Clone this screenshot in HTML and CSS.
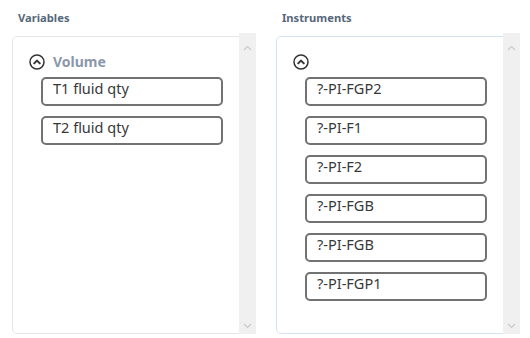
FILE: index.html
```html
<!DOCTYPE html>
<html>
<head>
<meta charset="utf-8">
<link rel="stylesheet" href="styles.css">
</head>
<body>
<div class="page">
  <section class="column">
    <div class="label">Variables</div>
    <div class="panel">
      <div class="panel-body">
        <div class="group-head">
          <span class="toggle"><svg width="16" height="16" viewBox="0 0 16 16"><circle cx="8" cy="8" r="7" fill="none" stroke="#333" stroke-width="1.5"/><path d="M5.2 9.4 L8 6.6 L10.8 9.4" fill="none" stroke="#333" stroke-width="2" stroke-linecap="round" stroke-linejoin="round"/></svg></span>
          <span class="group-title">Volume</span>
        </div>
        <div class="item">T1 fluid qty</div>
        <div class="item">T2 fluid qty</div>
      </div>
      <div class="scrollbar">
        <svg width="9" height="6" viewBox="0 0 9 6"><path d="M1 5 L4.5 1.5 L8 5" fill="none" stroke="#c9c9c9" stroke-width="1.2"/></svg>
        <svg width="9" height="6" viewBox="0 0 9 6"><path d="M1 1 L4.5 4.5 L8 1" fill="none" stroke="#c9c9c9" stroke-width="1.2"/></svg>
      </div>
    </div>
  </section>
  <section class="column">
    <div class="label">Instruments</div>
    <div class="panel panel-active">
      <div class="panel-body">
        <div class="group-head">
          <span class="toggle"><svg width="16" height="16" viewBox="0 0 16 16"><circle cx="8" cy="8" r="7" fill="none" stroke="#333" stroke-width="1.5"/><path d="M5.2 9.4 L8 6.6 L10.8 9.4" fill="none" stroke="#333" stroke-width="2" stroke-linecap="round" stroke-linejoin="round"/></svg></span>
        </div>
        <div class="item">?-PI-FGP2</div>
        <div class="item">?-PI-F1</div>
        <div class="item">?-PI-F2</div>
        <div class="item">?-PI-FGB</div>
        <div class="item">?-PI-FGB</div>
        <div class="item">?-PI-FGP1</div>
      </div>
      <div class="scrollbar">
        <svg width="9" height="6" viewBox="0 0 9 6"><path d="M1 5 L4.5 1.5 L8 5" fill="none" stroke="#c9c9c9" stroke-width="1.2"/></svg>
        <svg width="9" height="6" viewBox="0 0 9 6"><path d="M1 1 L4.5 4.5 L8 1" fill="none" stroke="#c9c9c9" stroke-width="1.2"/></svg>
      </div>
    </div>
  </section>
</div>
</body>
</html>
```
FILE: styles.css
```css
html, body {
  margin: 0;
  padding: 0;
  background: #ffffff;
  font-family: "Noto Sans", "Open Sans", sans-serif;
}
.page {
  display: flex;
  gap: 20px;
  padding: 9px 0 0 12px;
}
.column {
  width: 244px;
  display: flex;
  flex-direction: column;
}
.label {
  font-size: 11.2px;
  font-weight: 700;
  color: #56677a;
  line-height: 17px;
  padding-left: 6px;
  margin-bottom: 10px;
}
.panel {
  height: 298px;
  box-sizing: border-box;
  border: 1px solid #e6e6e6;
  border-radius: 5px;
  display: flex;
}
.panel-active {
  border-color: #d4e3f3;
}
.panel-body {
  flex: 1;
  padding: 16px 0 0 16px;
}
.group-head {
  display: flex;
  align-items: center;
  gap: 8px;
  height: 17px;
  margin-bottom: 7px;
}
.toggle {
  display: flex;
  width: 16px;
  height: 16px;
}
.group-title {
  font-size: 14px;
  font-weight: 700;
  color: #8b98aa;
  line-height: 17px;
}
.item {
  width: 182px;
  height: 29px;
  box-sizing: border-box;
  margin: 0 0 10px 12px;
  border: 2px solid #727272;
  border-radius: 5px;
  padding: 0 0 0 10px;
  font-size: 14.5px;
  font-weight: 400;
  line-height: 18px;
  color: #383838;
}
.scrollbar {
  width: 17px;
  margin: -4px -1px -4px 0;
  background: #f0f0f0;
  display: flex;
  flex-direction: column;
  justify-content: space-between;
  align-items: center;
  padding: 12px 0 8px;
  box-sizing: border-box;
}
```
